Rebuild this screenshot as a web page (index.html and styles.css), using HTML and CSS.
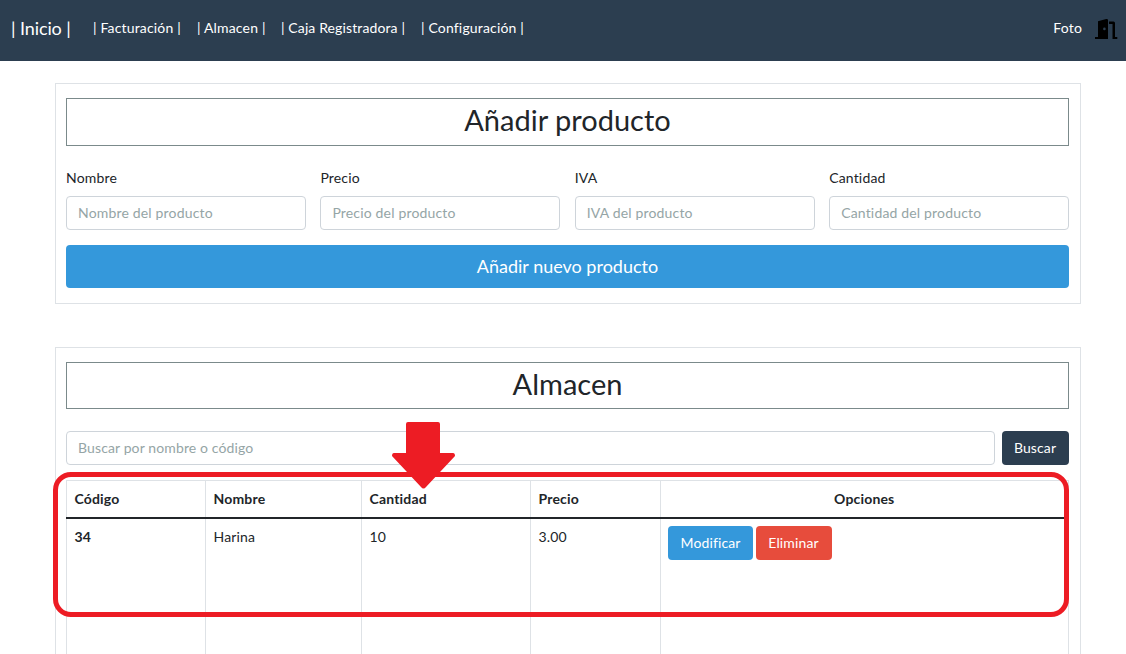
FILE: index.html
```
<!DOCTYPE html>
<html lang="es">
<head>
<meta charset="utf-8">
<title>Almacen</title>
<link rel="stylesheet" href="styles.css">
</head>
<body>
<nav class="navbar">
  <a class="brand">| Inicio |</a>
  <a class="nav-link facturacion">| Facturación |</a>
  <a class="nav-link almacen">| Almacen |</a>
  <a class="nav-link caja">| Caja Registradora |</a>
  <a class="nav-link config">| Configuración |</a>
  <a class="nav-link photo">Foto</a>
  <svg class="door" width="23" height="23" viewBox="0 0 23 23">
    <path fill="#000" fill-rule="evenodd" d="M3 3.200 11.200 1Q13 .6 13 2.200V21H0V19H3ZM9.400 9.600a1.200 1.200 0 1 0 0 2.600 1.200 1.200 0 0 0 0-2.600ZM14 3.500H18.500Q20 3.500 20 5V19H22.300V21H17.500V6H14Z"/>
  </svg>
</nav>
<main class="page">
  <section class="card add">
    <h2 class="title">Añadir producto</h2>
    <form class="fields">
      <label class="field">Nombre<input class="input" placeholder="Nombre del producto"></label>
      <label class="field">Precio<input class="input" placeholder="Precio del producto"></label>
      <label class="field">IVA<input class="input" placeholder="IVA del producto"></label>
      <label class="field">Cantidad<input class="input" placeholder="Cantidad del producto"></label>
    </form>
    <button class="btn primary large">Añadir nuevo producto</button>
  </section>
  <section class="card stock">
    <h2 class="title short">Almacen</h2>
    <div class="search">
      <input class="input" placeholder="Buscar por nombre o código">
      <button class="btn dark">Buscar</button>
    </div>
    <table class="table">
      <colgroup><col class="c1"><col class="c2"><col class="c3"><col class="c4"><col></colgroup>
      <thead><tr><th>Código</th><th>Nombre</th><th>Cantidad</th><th>Precio</th><th class="center">Opciones</th></tr></thead>
      <tbody>
        <tr><th>34</th><td>Harina</td><td>10</td><td>3.00</td>
        <td><div class="actions"><button class="btn primary edit">Modificar</button><button class="btn danger">Eliminar</button></div></td></tr>
      </tbody>
    </table>
  </section>
</main>
<div class="highlight"></div>
<svg class="arrow" width="64" height="68" viewBox="0 0 64 68"><path fill="#ed1c24" d="M16 0H46Q48 0 48 2V31H61Q63 31 63 34L34 65Q31.500 68 29 65L0 34Q0 31 2 31H14V2Q14 0 16 0Z"/></svg>
</body>
</html>
```
FILE: styles.css
```
* { box-sizing: border-box; }
body {
  margin: 0;
  height: 654px;
  background: #fff;
  color: #212529;
  font: 14px/20px Lato, "Liberation Sans", sans-serif;
  letter-spacing: .17px;
}
.navbar {
  display: flex;
  align-items: center;
  height: 61px;
  padding: 0 8px 5px 11px;
  background: #2c3e50;
  color: #fff;
}
.brand { width: 82px; font-size: 18px; letter-spacing: -.1px; white-space: nowrap; }
.nav-link { white-space: nowrap; }
.facturacion { width: 104px; }
.almacen { width: 84px; }
.caja { width: 140px; letter-spacing: .12px; }
.photo { margin-left: auto; }
.door { margin: 2px 0 0 13px; }
.page { height: 593px; padding: 22px 45px 0 55px; }
.card { border: 1px solid #dee2e6; padding: 14px 11px 15px 10px; }
.add { height: 221px; }
.stock { height: 307px; margin-top: 43px; padding-bottom: 0; border-bottom: 0; }
.title {
  height: 48px;
  margin: 0 0 22px;
  border: 1px solid #7b8a8b;
  font-size: 29px;
  font-weight: 400;
  letter-spacing: 0;
  line-height: 41px;
  text-align: center;
}
.title.short { height: 47px; }
.fields { display: grid; grid-template-columns: repeat(4, 1fr); gap: 14.500px; }
.field { display: flex; flex-direction: column; gap: 8px; min-width: 0; }
.input {
  width: 100%;
  height: 34px;
  padding: 0 11px 2px;
  border: 1px solid #ced4da;
  border-radius: 4px;
  background: #fff;
  font: inherit;
  letter-spacing: inherit;
}
.search .input { letter-spacing: .12px; }
.input::placeholder { color: #95a5a6; opacity: 1; }
.btn {
  height: 34px;
  padding: 0;
  border: 0;
  border-radius: 4px;
  color: #fff;
  font: inherit;
  letter-spacing: .12px;
}
.primary { background: #3498db; }
.danger { width: 76px; padding-right: 1px; background: #e74c3c; }
.dark { flex: none; width: 67px; padding-right: 1px; background: #2c3e50; }
.large { display: block; width: 100%; height: 43px; margin-top: 15px; padding-bottom: 2px; font-size: 18px; letter-spacing: 0; }
.search { display: flex; gap: 7px; margin-bottom: 15px; }
.table { width: 100%; table-layout: fixed; border-collapse: collapse; }
.c1 { width: 139px; }
.c2 { width: 156px; }
.c3 { width: 169px; }
.c4 { width: 130px; }
.table th, .table td {
  padding: 8px 8px 0 7.500px;
  border: 1px solid #dee2e6;
  text-align: left;
  vertical-align: top;
}
.table thead th { height: 37px; border-bottom: 2px solid #212529; }
.table tbody tr { height: 137px; }
.table tbody th, .table tbody td { border-bottom: 0; }
.table .center { text-align: center; }
.actions { display: flex; gap: 3px; margin: -1px 0 0 -.500px; }
.edit { width: 85px; }
.highlight {
  position: absolute;
  left: 53px;
  top: 472px;
  width: 1016px;
  height: 145px;
  border: 5px solid #ed1c24;
  border-radius: 18px;
}
.arrow { position: absolute; left: 392px; top: 422px; }
```
